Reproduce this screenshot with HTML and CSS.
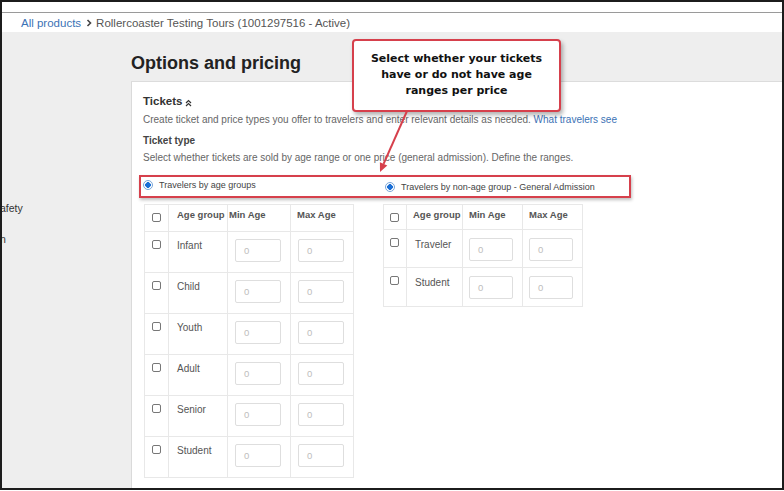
FILE: index.html
```html
<!DOCTYPE html>
<html>
<head>
<meta charset="utf-8">
<link rel="stylesheet" href="styles.css">
</head>
<body>
<div class="frame">
  <div class="topstrip"></div>
  <div class="crumbs">
    <span class="link">All products</span>
    <svg class="sep" width="6" height="8" viewBox="0 0 6 8"><polyline points="1.5,1 4.5,4 1.5,7" fill="none" stroke="#444" stroke-width="1.6"/></svg>
    <span class="crumb">Rollercoaster Testing Tours (1001297516 - Active)</span>
  </div>
  <div class="main">
    <aside class="sidebar">
      <div class="side-item s1">afety</div>
      <div class="side-item s2">n</div>
    </aside>
    <section class="content">
      <div class="titleband"><h1>Options and pricing</h1></div>
      <div class="card">
        <div class="tickets-head">Tickets
          <svg class="chev" width="7" height="8" viewBox="0 0 7 8"><polyline points="1,4 3.5,1.5 6,4" fill="none" stroke="#333" stroke-width="1.2"/><polyline points="1,7 3.5,4.5 6,7" fill="none" stroke="#333" stroke-width="1.2"/></svg>
        </div>
        <p class="desc">Create ticket and price types you offer to travelers and enter relevant details as needed. <span class="link">What travelers see</span></p>
        <div class="subhead">Ticket type</div>
        <p class="desc2">Select whether tickets are sold by age range or one price (general admission). Define the ranges.</p>
        <div class="choice">
          <label class="opt opt1"><span class="radio"></span><span>Travelers by age groups</span></label>
          <label class="opt opt2"><span class="radio"></span><span>Travelers by non-age group - General Admission</span></label>
        </div>
        <div class="tables">
          <div class="grid gl">
            <div class="c h cb"><span class="check"></span></div>
            <div class="c h">Age group</div>
            <div class="c h hmin">Min Age</div>
            <div class="c h hmax">Max Age</div>

            <div class="c r cb"><span class="check"></span></div>
            <div class="c r lbl">Infant</div>
            <div class="c r inp"><span class="field">0</span></div>
            <div class="c r inp"><span class="field">0</span></div>

            <div class="c r cb"><span class="check"></span></div>
            <div class="c r lbl">Child</div>
            <div class="c r inp"><span class="field">0</span></div>
            <div class="c r inp"><span class="field">0</span></div>

            <div class="c r cb"><span class="check"></span></div>
            <div class="c r lbl">Youth</div>
            <div class="c r inp"><span class="field">0</span></div>
            <div class="c r inp"><span class="field">0</span></div>

            <div class="c r cb"><span class="check"></span></div>
            <div class="c r lbl">Adult</div>
            <div class="c r inp"><span class="field">0</span></div>
            <div class="c r inp"><span class="field">0</span></div>

            <div class="c r cb"><span class="check"></span></div>
            <div class="c r lbl">Senior</div>
            <div class="c r inp"><span class="field">0</span></div>
            <div class="c r inp"><span class="field">0</span></div>

            <div class="c r cb"><span class="check"></span></div>
            <div class="c r lbl">Student</div>
            <div class="c r inp"><span class="field">0</span></div>
            <div class="c r inp"><span class="field">0</span></div>
          </div>

          <div class="grid gr">
            <div class="c h cb"><span class="check"></span></div>
            <div class="c h">Age group</div>
            <div class="c h">Min Age</div>
            <div class="c h">Max Age</div>

            <div class="c r cb"><span class="check"></span></div>
            <div class="c r lbl">Traveler</div>
            <div class="c r inp"><span class="field">0</span></div>
            <div class="c r inp"><span class="field">0</span></div>

            <div class="c r cb"><span class="check"></span></div>
            <div class="c r lbl">Student</div>
            <div class="c r inp"><span class="field">0</span></div>
            <div class="c r inp"><span class="field">0</span></div>
          </div>
        </div>
      </div>
    </section>
  </div>

  <div class="callout">Select whether your tickets<br>have or do not have age<br>ranges per price</div>
  <svg class="arrow" width="780" height="486" viewBox="0 0 780 486">
    <line x1="405" y1="109" x2="381.6" y2="161.8" stroke="#d6404c" stroke-width="2"/>
    <polygon points="378,170 385.3,163.4 377.9,160.2" fill="#d6404c"/>
  </svg>
</div>
</body>
</html>
```

FILE: styles.css
```css
body {
  margin: 0;
  width: 784px;
  height: 491px;
  overflow: hidden;
  font-family: "Liberation Sans", Arial, sans-serif;
  background: #fff;
}

.frame {
  position: relative;
  box-sizing: border-box;
  width: 784px;
  height: 490px;
  border: 2px solid #1c1c1c;
  display: flex;
  flex-direction: column;
  background: #fff;
  overflow: hidden;
}

.topstrip {
  flex: none;
  height: 10px;
  border-bottom: 1px solid #9a9a9a;
}

.crumbs {
  flex: none;
  height: 19px;
  display: flex;
  align-items: center;
  padding-left: 19px;
  font-size: 11.5px;
  color: #555;
}

.crumbs .sep {
  margin: 0 4px 0 5px;
}

.link {
  color: #3b72b5;
}

.main {
  flex: 1;
  display: flex;
  background: #eeeeee;
}

.sidebar {
  flex: none;
  width: 129px;
  padding-top: 169px;
  font-size: 10.5px;
  color: #333;
  line-height: 14px;
}

.side-item {
  margin-left: -2px;
}

.side-item.s2 {
  margin-top: 17px;
}

.content {
  flex: 1;
  display: flex;
  flex-direction: column;
}

.titleband {
  flex: none;
  box-sizing: border-box;
  height: 50px;
  padding-top: 20px;
  border-bottom: 1px solid #dcdcdc;
}

h1 {
  margin: 0;
  font-size: 18px;
  line-height: 22px;
  font-weight: bold;
  color: #222;
}

.card {
  flex: 1;
  background: #fff;
  border-left: 1px solid #dadada;
  padding: 12px 0 0 11px;
}

.tickets-head {
  font-size: 11.5px;
  font-weight: bold;
  color: #333;
  line-height: 14px;
  display: flex;
  align-items: center;
  gap: 3px;
}

.chev {
  margin-top: 3px;
}

.desc {
  margin: 5px 0 0;
  font-size: 10px;
  line-height: 14px;
  color: #666;
}

.subhead {
  margin-top: 7px;
  font-size: 10px;
  font-weight: bold;
  line-height: 14px;
  color: #444;
}

.desc2 {
  margin: 3px 0 0;
  font-size: 10px;
  line-height: 14px;
  color: #666;
}

.choice {
  margin: 10px 0 0 -4px;
  width: 492px;
  height: 23px;
  box-sizing: border-box;
  border: 2px solid #d6404c;
  box-shadow: 1px 2px 3px rgba(0, 0, 0, 0.25);
  display: flex;
  align-items: flex-start;
}

.opt {
  display: flex;
  align-items: center;
  gap: 6px;
  font-size: 9px;
  color: #444;
  line-height: 12px;
}

.opt1 {
  width: 242px;
  padding-left: 2px;
  padding-top: 2px;
}

.opt2 {
  padding-top: 4px;
}

.radio {
  box-sizing: border-box;
  width: 10px;
  height: 10px;
  border-radius: 50%;
  border: 1px solid #7aa6d8;
  background: radial-gradient(circle, #1a6fd6 0 2.6px, #fff 3px);
}

.tables {
  margin-top: 6px;
  display: flex;
  align-items: flex-start;
}

.grid {
  display: grid;
  border-top: 1px solid #e8e8e8;
  border-left: 1px solid #e8e8e8;
}

.gl {
  margin-left: 1px;
  grid-template-columns: 24px 59px 63px 63px;
  grid-template-rows: 27px repeat(6, 41px);
}

.gr {
  margin-left: 29px;
  grid-template-columns: 23px 56px 60px 60px;
  grid-template-rows: 25px 38px 39px;
}

.c {
  border-right: 1px solid #e8e8e8;
  border-bottom: 1px solid #e8e8e8;
  box-sizing: border-box;
}

.h {
  font-size: 9.5px;
  font-weight: bold;
  color: #555;
  line-height: 12px;
  padding: 4px 0 0 8px;
}

.gl .hmin {
  padding-left: 1px;
}

.gl .hmax {
  padding-left: 6px;
}

.gr .h {
  padding-left: 6px;
}

.cb {
  padding: 8px 0 0 7px;
}

.h.cb {
  padding-top: 8px;
}

.gr .cb {
  padding-left: 6px;
}

.check {
  display: block;
  box-sizing: border-box;
  width: 9px;
  height: 9px;
  border: 1px solid #777;
  border-radius: 2px;
  background: #fff;
}

.lbl {
  font-size: 10px;
  color: #555;
  line-height: 12px;
  padding: 8px 0 0 8px;
}

.gr .lbl {
  padding-top: 9px;
}

.inp {
  padding: 7px 0 0 7px;
}

.gr .inp {
  padding-left: 6px;
  padding-top: 8px;
}

.field {
  display: block;
  box-sizing: border-box;
  width: 46px;
  height: 23px;
  border: 1px solid #dedede;
  border-radius: 2px;
  font-size: 9.5px;
  line-height: 21px;
  color: #bdbdbd;
  padding-left: 8px;
}

.gr .field {
  width: 44px;
}

.callout {
  position: absolute;
  left: 350px;
  top: 37px;
  width: 209px;
  height: 73px;
  box-sizing: border-box;
  border: 2px solid #d6404c;
  border-radius: 4px;
  background: #fff;
  box-shadow: 2px 3px 4px rgba(0, 0, 0, 0.3);
  padding-top: 10px;
  text-align: center;
  font-family: "DejaVu Sans", sans-serif;
  font-weight: bold;
  font-size: 11px;
  line-height: 16px;
  color: #111;
}

.arrow {
  position: absolute;
  left: 0;
  top: 0;
  pointer-events: none;
}
```
